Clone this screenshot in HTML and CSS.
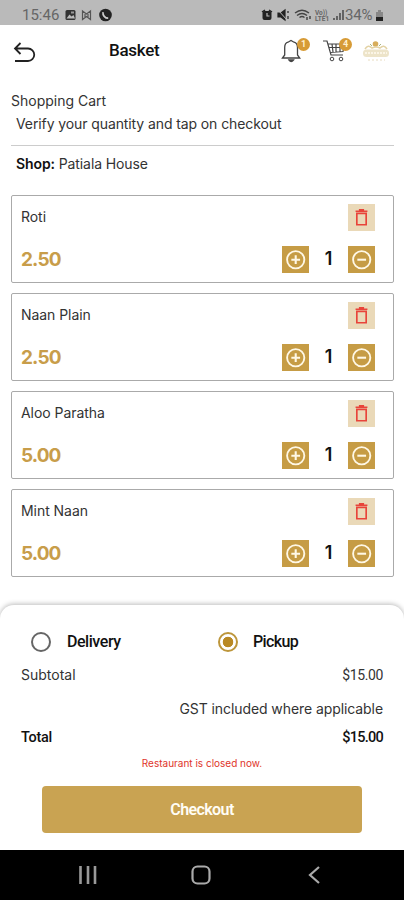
FILE: index.html
```html
<!DOCTYPE html>
<html lang="en">
<head>
<meta charset="utf-8">
<title>Basket</title>
<link rel="stylesheet" href="styles.css">
</head>
<body>
<svg class="defs" width="0" height="0">
  <symbol id="trash" viewBox="0 0 26 26"><path d="M8.500 9h9v11h-9zM7.300 7h11.400M10.500 5.500h5" fill="none" stroke="#e8443a" stroke-width="1.600"/></symbol>
  <symbol id="plus" viewBox="0 0 26 26"><circle cx="13.200" cy="13.200" r="8.300" fill="none" stroke="#fff8e6" stroke-width="1.800"/><path d="M9 13.200h8.400M13.200 9v8.400" stroke="#fff8e6" stroke-width="2"/></symbol>
  <symbol id="minus" viewBox="0 0 26 26"><circle cx="13.200" cy="13.200" r="8.300" fill="none" stroke="#fff8e6" stroke-width="1.800"/><path d="M9 13.200h8.400" stroke="#fff8e6" stroke-width="2"/></symbol>
</svg>
<div class="status">
  <span class="clock">15:46</span>
  <svg class="status-left" width="50" height="14" viewBox="0 0 50 14">
    <rect x="1.500" y="2" width="10" height="10" rx="1.500" fill="#333"/><path d="M2.500 10.500l3-4 2 2 2-1.500 1.500 3.500z" fill="#bbb"/><path d="M7 3.500h3v2H7z" fill="#999"/>
    <path d="M18.500 3v8.500l4-3 4 3V3l-4 3zM21 9v-3M24 9V6" fill="none" stroke="#555" stroke-width="1.200"/>
    <circle cx="41.500" cy="7" r="6.300" fill="#222"/><path d="M39 4.200c-.5 3 2 6 5.200 6" fill="none" stroke="#ccc" stroke-width="1.700"/>
  </svg>
  <svg class="status-right" width="85" height="14" viewBox="0 0 85 14">
    <path d="M1 4l3-2M11 4L8 2" stroke="#222" stroke-width="1.500"/><rect x="1.500" y="3" width="9" height="9" rx="2" fill="#222"/><path d="M6 5v3h2.500" fill="none" stroke="#bbb" stroke-width="1.200"/>
    <path d="M17 5h3l4-3v10l-4-3h-3zM27 3v2M27 8v3" fill="#222" stroke="#222" stroke-width="1.200"/><path d="M17 2l9 10" stroke="#bbb"/>
    <path d="M34 5q7-5.500 14 0M36 7.500q5-4 10 0M38.500 9.500q2.500-2 5 0" fill="none" stroke="#444" stroke-width="1.400"/><path d="M46 12v-3M49 11V8" stroke="#333" stroke-width="1.300"/>
    <text x="54" y="6.500" class="lte">Vo))</text><text x="54" y="13" class="lte">LTE1</text>
    <path d="M73 12v-2M76 12V8M79 12V5M82 12V2" stroke="#555" stroke-width="1.700"/>
  </svg>
  <span class="percent">34%</span>
  <svg class="battery" width="9" height="13" viewBox="0 0 9 13"><path d="M3 1h3v2h2v5H1V3h2z" fill="#888"/><path d="M1 8h7v4H1z" fill="#222"/></svg>
</div>
<header class="header">
  <svg class="back" width="24" height="24" viewBox="0 0 24 24"><path d="M8.500 1L3 6.500 8.500 12M3 6.500h13a5.800 5.800 0 0 1 0 12.500H3" fill="none" stroke="#222" stroke-width="1.800"/></svg>
  <h1>Basket</h1>
  <div class="bell">
    <svg width="24" height="26" viewBox="0 0 24 26"><path d="M2.500 20l2.200-3V9.500Q4.700 5 8 4.200L11 2.500l3 1.700q3.500.8 3.500 5.300V17l2.200 3zM9 22q2.200 3 4.500 0z" fill="none" stroke="#444" stroke-width="1.300"/></svg>
    <span class="badge">1</span>
  </div>
  <div class="cart">
    <svg width="26" height="26" viewBox="0 0 26 26"><path d="M1 3h4l4 14h12M6 6h17l-2 7.500-13 1M7 9.500h15M10 6l1 8M14 6v8M18 6v8" fill="none" stroke="#444" stroke-width="1.200"/><circle cx="10" cy="21" r="1.800" fill="none" stroke="#444"/><circle cx="19" cy="21" r="1.800" fill="none" stroke="#444"/></svg>
    <span class="badge">4</span>
  </div>
  <svg class="brand" width="28" height="26" viewBox="0 0 28 26"><circle cx="13.500" cy="6" r="2.800" fill="#d7ad5b"/><path d="M3 11q3-5 7-1 4-2 8 0 4-4 7 1" fill="none" stroke="#e3d2a4" stroke-width="1.500"/><path d="M10 8l-2-2M17 8l2-2" stroke="#a9b583"/><rect x="1" y="11.500" width="26" height="7.500" rx="3.500" fill="#ede4c9"/><path d="M3 15h22" stroke="#fffaf0" stroke-width="1.500" stroke-dasharray="2 1"/><path d="M6 22h17" stroke="#e8dcc0" stroke-dasharray="2 2"/></svg>
</header>
<main class="main">
  <h2>Shopping Cart</h2>
  <p class="hint">Verify your quantity and tap on checkout</p>
  <p class="shop"><b>Shop:</b> <span>Patiala House</span></p>
  <section class="item"><span class="name">Roti</span><span class="btn del"><svg><use href="#trash"/></svg></span><span class="price">2.50</span><div class="qty"><span class="btn"><svg><use href="#plus"/></svg></span><b>1</b><span class="btn"><svg><use href="#minus"/></svg></span></div></section>
  <section class="item"><span class="name">Naan Plain</span><span class="btn del"><svg><use href="#trash"/></svg></span><span class="price">2.50</span><div class="qty"><span class="btn"><svg><use href="#plus"/></svg></span><b>1</b><span class="btn"><svg><use href="#minus"/></svg></span></div></section>
  <section class="item"><span class="name">Aloo Paratha</span><span class="btn del"><svg><use href="#trash"/></svg></span><span class="price">5.00</span><div class="qty"><span class="btn"><svg><use href="#plus"/></svg></span><b>1</b><span class="btn"><svg><use href="#minus"/></svg></span></div></section>
  <section class="item"><span class="name">Mint Naan</span><span class="btn del"><svg><use href="#trash"/></svg></span><span class="price">5.00</span><div class="qty"><span class="btn"><svg><use href="#plus"/></svg></span><b>1</b><span class="btn"><svg><use href="#minus"/></svg></span></div></section>
</main>
<section class="sheet">
  <div class="options"><span class="radio"></span><b class="delivery">Delivery</b><span class="radio on"></span><b class="pickup">Pickup</b></div>
  <div class="row sub"><span>Subtotal</span><span class="amount">$15.00</span></div>
  <p class="gst">GST included where applicable</p>
  <div class="row total"><b>Total</b><b class="amount">$15.00</b></div>
  <p class="closed">Restaurant is closed now.</p>
  <button class="checkout">Checkout</button>
</section>
<nav class="nav">
  <svg width="20" height="20" viewBox="0 0 20 20"><path d="M2.500 1v18M10 1v18M17 1v18" stroke="#999" stroke-width="2.600"/></svg>
  <svg width="20" height="20" viewBox="0 0 20 20"><rect x="1.500" y="1.500" width="17" height="17" rx="5" fill="none" stroke="#aaa" stroke-width="2.200"/></svg>
  <svg width="20" height="20" viewBox="0 0 20 20"><path d="M15 2L6 10l9 8" fill="none" stroke="#aaa" stroke-width="2.200"/></svg>
</nav>
</body>
</html>
```
FILE: styles.css
```css
* { box-sizing: border-box; }
body { margin: 0; width: 404px; height: 900px; background: #fff; color: #333; font-family: Inter, "Liberation Sans", sans-serif; font-size: 14px; overflow: hidden; display: flex; flex-direction: column; }
h1, h2, p { margin: 0; font-weight: 400; }
b { font-weight: 600; }
svg { display: block; flex: none; }
.defs { position: absolute; }
.status { height: 25px; flex: none; background: #bababa; display: flex; align-items: center; padding: 5px 20px 0 22px; font: 15px/16px Roboto, sans-serif; color: #666; }
.clock { width: 42px; }
.status-right { margin-left: auto; margin-right: -2px; }
.lte { font: 700 6.5px Roboto, sans-serif; fill: #666; }
.percent { width: 30px; margin-left: 1px; letter-spacing: -0.2px; }
.header { height: 65px; flex: none; display: flex; padding-left: 12px; }
.back { margin-top: 17px; }
h1 { font: 500 17px/20px Roboto, sans-serif; letter-spacing: -0.3px; color: #111; margin: 15px 0 0 73px; width: 171px; }
.bell, .cart { position: relative; margin-top: 13px; }
.bell { width: 42px; }
.cart { width: 40px; }
.badge { position: absolute; top: 0; left: 17px; width: 13px; height: 13px; border-radius: 50%; background: #d79b36; color: #fff0cf; font: 700 9px/13px Roboto, sans-serif; text-align: center; }
.brand { margin-top: 13px; }
.main { height: 515px; flex: none; padding: 0 10px 0 11px; }
h2 { font-size: 14px; line-height: 20px; padding-top: 1px; height: 24px; }
.hint { line-height: 20px; height: 32px; padding-left: 5px; border-bottom: 1px solid #ccc; letter-spacing: -0.1px; }
.shop { height: 49px; padding: 8px 0 0 5px; line-height: 20px; letter-spacing: -0.1px; }
.shop b { color: #111; }
.item { height: 88px; margin-bottom: 10px; border: 1.5px solid #aaa; border-radius: 2px; padding: 8px 18px 8px 9px; display: grid; grid-template-columns: 1fr auto; grid-template-rows: 27px 27px; row-gap: 15px; }
.name { line-height: 26px; letter-spacing: -0.05px; }
.price { font-weight: 700; font-size: 19px; letter-spacing: -0.9px; line-height: 27px; color: #c89d4a; }
.btn { width: 27px; height: 27px; background: #c69c45; display: block; }
.btn svg { width: 27px; height: 27px; }
.del { background: #ead9b8; justify-self: end; }
.qty { display: flex; width: 93px; justify-content: space-between; line-height: 26px; font-size: 18px; color: #111; }
.sheet { height: 245px; flex: none; padding: 26px 21px 0; border-radius: 14px 14px 0 0; box-shadow: 0 -1px 5px #bbb; background: #fff; }
.options { display: flex; align-items: center; height: 22px; padding-left: 10px; font: 16px/20px Roboto, sans-serif; letter-spacing: -0.45px; color: #111; }
.options b { font-weight: 500; }
.radio { width: 20px; height: 20px; border: 2px solid #666; border-radius: 50%; }
.radio.on { border-color: #bd963b; background: radial-gradient(circle, #b98924 0 5px, #fff 5.6px); }
.delivery { width: 167px; padding-left: 16px; }
.pickup { padding-left: 15px; letter-spacing: -0.65px; }
.row { display: flex; justify-content: space-between; line-height: 20px; }
.sub { margin-top: 12px; }
.amount { font-family: Roboto, sans-serif; letter-spacing: -0.4px; }
.gst { text-align: right; line-height: 20px; margin-top: 14px; letter-spacing: -0.08px; }
.total { margin-top: 9px; font-family: Roboto, sans-serif; font-size: 14.5px; letter-spacing: -0.3px; color: #111; }
.total b { font-weight: 500; }
.total .amount { letter-spacing: -0.75px; }
.closed { text-align: center; color: #e0342a; font-size: 10px; line-height: 16px; margin-top: 7px; }
.checkout { display: block; width: 320px; height: 47px; margin: 15px auto 0; border: 0; border-radius: 4px; background: #c9a352; color: #fffdf5; font: 600 16px/20px Roboto, sans-serif; letter-spacing: -0.6px; }
.nav { height: 50px; flex: none; background: #000; display: flex; justify-content: space-between; align-items: center; padding: 0 80px 0 78px; }
```
